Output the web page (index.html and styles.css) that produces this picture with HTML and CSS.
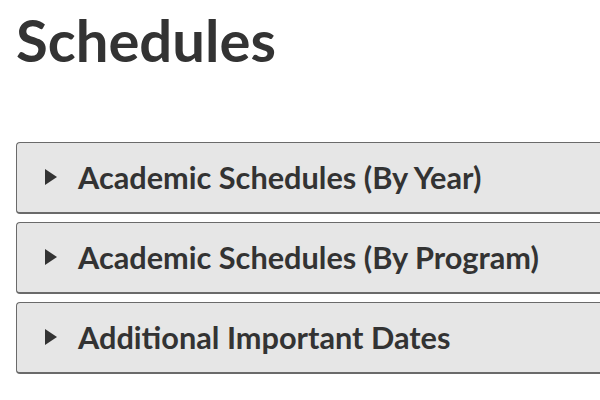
FILE: index.html
```html
<!DOCTYPE html>
<html lang="en">
<head>
<meta charset="utf-8">
<title>Schedules</title>
<link rel="stylesheet" href="styles.css">
</head>
<body>
<main class="page">
  <h1 class="title">Schedules</h1>
  <div class="accordion">
    <details class="panel">
      <summary class="panel-head"><span class="caret"></span><span class="label">Academic Schedules (By Year)</span></summary>
    </details>
    <details class="panel">
      <summary class="panel-head"><span class="caret"></span><span class="label">Academic Schedules (By Program)</span></summary>
    </details>
    <details class="panel">
      <summary class="panel-head"><span class="caret"></span><span class="label">Additional Important Dates</span></summary>
    </details>
  </div>
</main>
</body>
</html>
```
FILE: styles.css
```css
html, body {
  margin: 0;
  padding: 0;
  background: #ffffff;
  overflow: hidden;
}
.page {
  padding: 5px 0 0 16px;
  font-family: Lato, "Open Sans", sans-serif;
  color: #333333;
}
.title {
  margin: 0;
  font-size: 58px;
  font-weight: 700;
  line-height: 1.2;
}
.accordion {
  margin-top: 67px;
  display: flex;
  flex-direction: column;
  gap: 8px;
}
.panel {
  background: #e6e6e6;
  border: 1px solid #6a6a6a;
  border-bottom-width: 2px;
  border-right: none;
  border-radius: 4px 0 0 4px;
}
.panel-head {
  list-style: none;
  display: flex;
  align-items: center;
  height: 69px;
  padding-left: 28px;
  cursor: pointer;
}
.panel-head::-webkit-details-marker { display: none; }
.caret {
  width: 0;
  height: 0;
  border-top: 8px solid transparent;
  border-bottom: 8px solid transparent;
  border-left: 12px solid #333333;
  margin-right: 21px;
}
.label {
  font-size: 30.7px;
  font-weight: 700;
}
```
